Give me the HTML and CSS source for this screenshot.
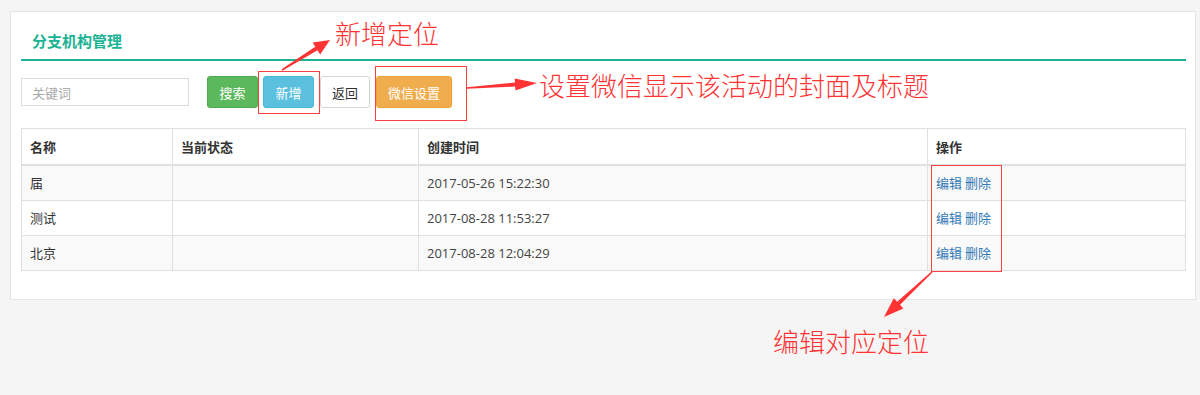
FILE: index.html
```html
<!DOCTYPE html>
<html lang="zh-CN">
<head>
	<meta charset="utf-8" />
	<title>分支机构管理</title>
	<link rel="stylesheet" href="styles.css">
</head>
<body>
	<div class="panel">
		<div class="panel-title">
			<h5>分支机构管理</h5>
		</div>
		<div class="toolbar">
			<input class="keyword" type="text" placeholder="关键词" />
			<div class="buttons">
				<button class="btn btn-search">搜索</button>
				<button class="btn btn-add">新增</button>
				<button class="btn btn-back">返回</button>
				<button class="btn btn-wechat">微信设置</button>
			</div>
		</div>
		<table class="grid">
			<thead>
				<tr>
					<th class="col-name">名称</th>
					<th class="col-state">当前状态</th>
					<th class="col-time">创建时间</th>
					<th>操作</th>
				</tr>
			</thead>
			<tbody>
				<tr>
					<td>届</td>
					<td></td>
					<td class="time">2017-05-26 15:22:30</td>
					<td><a href="#">编辑</a> <a href="#">删除</a></td>
				</tr>
				<tr>
					<td>测试</td>
					<td></td>
					<td class="time">2017-08-28 11:53:27</td>
					<td><a href="#">编辑</a> <a href="#">删除</a></td>
				</tr>
				<tr>
					<td>北京</td>
					<td></td>
					<td class="time">2017-08-28 12:04:29</td>
					<td><a href="#">编辑</a> <a href="#">删除</a></td>
				</tr>
			</tbody>
		</table>
	</div>

	<!-- annotation layer drawn over the screenshot -->
	<div class="notes">
		<svg class="arrows" width="1200" height="395" viewBox="0 0 1200 395">
			<polygon points="282.4,70.7 317.5,50.2 320.1,54.4 330,40 312.7,42.6 315.3,46.8 281.6,69.3" />
			<polygon points="467.1,88.8 515.2,86.6 515.5,90.6 537,83 514.7,78.6 515.0,82.6 466.9,87.2" />
			<polygon points="932.5,272.6 900,304.8 903.4,308.4 884,317 893.8,298.2 897.2,301.8 931.5,271.4" />
		</svg>
		<div class="box box-add"></div>
		<div class="box box-wechat"></div>
		<div class="box box-edit"></div>
		<span class="note note-add">新增定位</span>
		<span class="note note-wechat">设置微信显示该活动的封面及标题</span>
		<span class="note note-edit">编辑对应定位</span>
	</div>
</body>
</html>
```

FILE: styles.css
```css
html {
	font-family: "Open Sans", "Noto Sans CJK SC", sans-serif;
	font-size: 13px;
	color: #333;
}

body {
	margin: 0;
	padding: 11px 4px 0 10px;
	height: 395px;
	box-sizing: border-box;
	background-color: #f5f5f5;
	overflow: hidden;
}

.panel {
	background-color: white;
	border: 1px solid #e5e5e5;
	padding: 0 9px 28px 10px;
}

.panel-title {
	border-bottom: 2px solid #1ab394;
	padding: 19px 11px 8px;
}

.panel-title h5 {
	margin: 0;
	font-size: 15px;
	line-height: 20px;
	font-weight: bold;
	color: #1ab394;
	font-family: "Noto Sans CJK SC", sans-serif;
}

.toolbar {
	display: flex;
	align-items: center;
	gap: 18px;
	margin-top: 15px;
}

.keyword {
	width: 168px;
	height: 28px;
	box-sizing: border-box;
	border: 1px solid #dcdcdc;
	padding: 0 10px;
	font-family: "Noto Sans CJK SC", sans-serif;
	font-size: 13px;
	outline: none;
}

.keyword::placeholder {
	color: #a9a9a9;
}

.buttons {
	display: flex;
	gap: 5px;
}

.btn {
	height: 32px;
	padding: 0 11px;
	border: 1px solid transparent;
	border-radius: 3px;
	font-family: "Noto Sans CJK SC", sans-serif;
	font-size: 13px;
	color: white;
	cursor: pointer;
}

.btn-search {
	background-color: #5cb85c;
	border-color: #4cae4c;
	width: 51px;
}

.btn-add {
	background-color: #5bc0de;
	border-color: #46b8da;
	width: 51px;
}

.btn-back {
	background-color: white;
	border-color: #d5d5d5;
	color: #333;
	margin-left: 1px;
	width: 50px;
}

.btn-wechat {
	background-color: #f0ad4e;
	border-color: #eea236;
	margin-left: 1px;
	width: 76px;
}

.grid {
	width: 100%;
	margin-top: 20px;
	border-collapse: collapse;
	border: 1px solid #e0e0e0;
}

.grid th,
.grid td {
	border: 1px solid #e0e0e0;
	padding: 8px;
	line-height: 18px;
	text-align: left;
	font-family: "Noto Sans CJK SC", sans-serif;
}

.grid th {
	font-weight: bold;
	border-bottom-width: 2px;
	padding-top: 9px;
}

.grid tbody tr:nth-child(odd) {
	background-color: #f9f9f9;
}

.grid td.time {
	font-family: "Open Sans", sans-serif;
	color: #444;
}

.col-name {
	width: 134px;
}

.col-state {
	width: 229px;
}

.col-time {
	width: 492px;
}

.grid a {
	color: #337ab7;
	text-decoration: none;
}

.notes {
	position: absolute;
	top: 0;
	left: 0;
	width: 1200px;
	height: 395px;
	pointer-events: none;
}

.arrows {
	position: absolute;
	top: 0;
	left: 0;
}

.arrows polygon {
	fill: #f33;
}

.box {
	position: absolute;
	border: 1px solid #ff4040;
}

.box-add {
	left: 258px;
	top: 71px;
	width: 60px;
	height: 41px;
}

.box-wechat {
	left: 375px;
	top: 66px;
	width: 90px;
	height: 53px;
}

.box-edit {
	left: 931px;
	top: 165px;
	width: 69px;
	height: 105px;
}

.note {
	position: absolute;
	font-family: "Noto Sans CJK SC", sans-serif;
	font-weight: 300;
	font-size: 26px;
	line-height: 1;
	color: #f33;
	white-space: nowrap;
}

.note-add {
	left: 335px;
	top: 20px;
}

.note-wechat {
	left: 539px;
	top: 72px;
}

.note-edit {
	left: 773px;
	top: 328px;
}
```
